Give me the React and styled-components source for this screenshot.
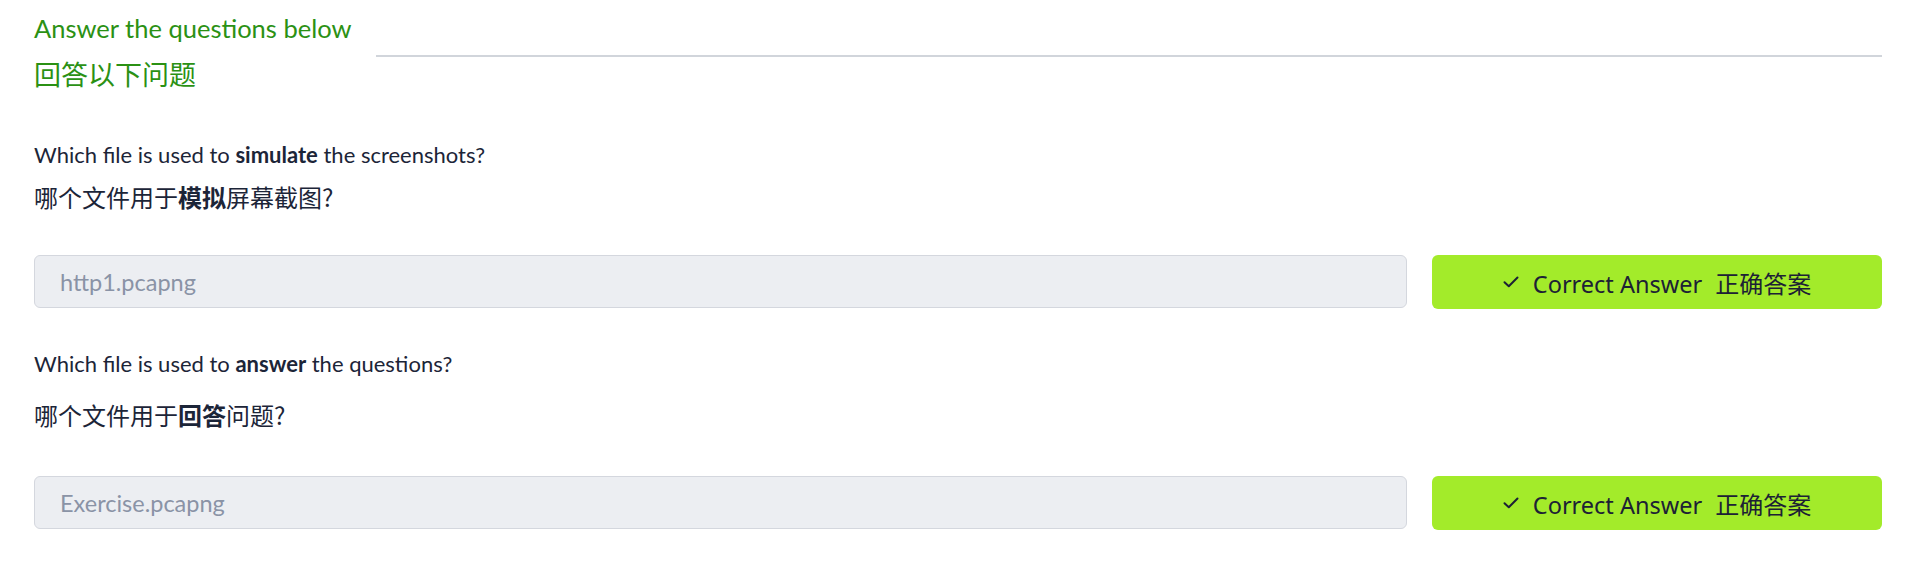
import React from "react";
import styled, { createGlobalStyle } from "styled-components";

const GlobalStyle = createGlobalStyle`
  html, body { margin: 0; padding: 0; background: #ffffff; }
  body {
    font-family: Lato, "Noto Sans CJK SC", sans-serif;
    color: #1c2538;
    -webkit-font-smoothing: antialiased;
  }
`;

const Page = styled.main`
  padding: 8px 27px 40px 34px;
`;

const Heading = styled.header`
  display: flex;
  align-items: center;
`;

const HeadingText = styled.div`
  color: #2b9114;
  display: flex;
  flex-direction: column;
`;

const TitleEn = styled.span`
  font-size: 25.5px;
  line-height: 40px;
`;

const TitleZh = styled.span`
  font-family: "Noto Sans CJK SC", sans-serif;
  font-size: 27px;
  line-height: 44px;
  margin-top: 4px;
`;

const Rule = styled.div`
  flex: 1;
  height: 2px;
  background: #d1d5db;
  margin: 7px 0 0 25px;
`;

const Question = styled.section`
  margin-top: ${(p) => p.$top}px;
`;

const QuestionEn = styled.p`
  margin: 0;
  font-size: 22px;
  line-height: 32px;
  b { font-weight: 700; }
`;

const QuestionZh = styled.p`
  margin: ${(p) => p.$gap}px 0 0;
  font-family: "Noto Sans CJK SC", sans-serif;
  font-size: 24px;
  line-height: 36px;
  b { font-weight: 700; }
`;

const AnswerRow = styled.div`
  display: flex;
  gap: 25px;
  margin-top: ${(p) => p.$top}px;
`;

const AnswerInput = styled.div`
  flex: 1;
  height: 51px;
  box-sizing: content-box;
  border: 1px solid #d4d7de;
  border-radius: 6px;
  background: #eceef2;
  color: #8a93a6;
  font-size: 23.5px;
  display: flex;
  align-items: center;
  padding: 0 25px;
`;

const CorrectButton = styled.button`
  width: 450px;
  height: 54px;
  border: none;
  border-radius: 6px;
  background: #a3eb2a;
  color: #1c2135;
  font-family: "Noto Sans", "Noto Sans CJK SC", sans-serif;
  font-size: 23.5px;
  display: flex;
  align-items: center;
  justify-content: center;
  gap: 14px;
  padding: 0;
  cursor: pointer;
`;

const ZhLabel = styled.span`
  font-family: "Noto Sans CJK SC", sans-serif;
  font-size: 24px;
  margin-left: 13px;
`;

const Check = () => (
  <svg width="16" height="12" viewBox="0 0 16 12" fill="none">
    <path d="M1.5 6.2 L5.8 10.2 L14.5 1.5" stroke="#1c2135" strokeWidth="2" strokeLinecap="round" strokeLinejoin="round" />
  </svg>
);

const questions = [
  {
    en: <>Which file is used to <b>simulate</b> the screenshots?</>,
    zh: <>哪个文件用于<b>模拟</b>屏幕截图?</>,
    answer: "http1.pcapng",
    top: 43,
    gap: 8,
    inputTop: 40,
  },
  {
    en: <>Which file is used to <b>answer</b> the questions?</>,
    zh: <>哪个文件用于<b>回答</b>问题?</>,
    answer: "Exercise.pcapng",
    top: 39,
    gap: 17,
    inputTop: 43,
  },
];

export default function App() {
  return (
    <>
      <GlobalStyle />
      <Page>
        <Heading>
          <HeadingText>
            <TitleEn>Answer the questions below</TitleEn>
            <TitleZh>回答以下问题</TitleZh>
          </HeadingText>
          <Rule />
        </Heading>
        {questions.map((q, i) => (
          <Question key={i} $top={q.top}>
            <QuestionEn>{q.en}</QuestionEn>
            <QuestionZh $gap={q.gap}>{q.zh}</QuestionZh>
            <AnswerRow $top={q.inputTop}>
              <AnswerInput>{q.answer}</AnswerInput>
              <CorrectButton>
                <Check />
                <span>
                  Correct Answer<ZhLabel>正确答案</ZhLabel>
                </span>
              </CorrectButton>
            </AnswerRow>
          </Question>
        ))}
      </Page>
    </>
  );
}
